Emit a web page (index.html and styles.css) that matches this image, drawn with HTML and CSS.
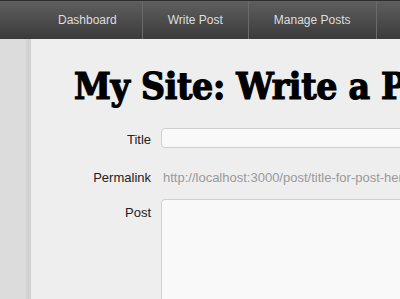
FILE: index.html
```html
<!doctype html>
<html lang="en">
<head>
    <meta name="viewport" content="width=device-width, initial-scale=1.0">
    <meta charset="UTF-8">
    <title>My Site: Write a Post</title>
    <link rel="stylesheet" href="styles.css">
</head>
<body>
<nav class="topnav">
    <ul class="nav-list">
        <li class="nav-item"><a href="#">Dashboard</a></li>
        <li class="nav-item"><a href="#">Write Post</a></li>
        <li class="nav-item"><a href="#">Manage Posts</a></li>
        <li class="nav-item"><a href="#">Settings</a></li>
    </ul>
</nav>
<div class="page">
    <main class="content">
        <h1 class="page-title">My Site: Write a Post</h1>
        <form class="post-form">
            <div class="field-row field-title">
                <label class="field-label" for="title">Title</label>
                <input class="text-input" type="text" id="title">
            </div>
            <div class="field-row field-permalink">
                <span class="field-label">Permalink</span>
                <span class="permalink">http://localhost:3000/post/title-for-post-here</span>
            </div>
            <div class="field-row field-post">
                <label class="field-label" for="post">Post</label>
                <textarea class="text-area" id="post"></textarea>
            </div>
        </form>
    </main>
</div>
</body>
</html>
```

FILE: styles.css
```css
body {
    margin: 0;
    font-family: "Liberation Sans", Arial, sans-serif;
    background-color: #dcdcdc;
    overflow: hidden;
}

.topnav {
    height: 38px;
    border-top: 1px solid #2e2e2e;
    background: linear-gradient(#5f5f5f, #3a3a3a);
    overflow: hidden;
}

.nav-list {
    display: flex;
    margin: 0;
    padding: 0 0 0 33px;
    list-style: none;
    white-space: nowrap;
}

.nav-item {
    border-right: 1px solid #6a6a6a;
}

.nav-item a {
    display: block;
    padding: 0 25px;
    line-height: 39px;
    font-size: 12px;
    color: #dedede;
    text-decoration: none;
}

.page {
    display: flex;
    height: calc(100vh - 39px);
    padding-left: 26px;
}

.content {
    flex: 1;
    border-left: 5px solid #d2d2d2;
    background-color: #eeeeee;
    overflow: hidden;
}

.page-title {
    margin: 29px 0 0;
    padding-left: 43px;
    font-family: "DejaVu Serif Condensed", "DejaVu Serif", serif;
    font-weight: 900;
    font-size: 37px;
    line-height: 1;
    letter-spacing: -0.3px;
    color: #000;
    -webkit-text-stroke: 1.2px #000;
    white-space: nowrap;
}

.post-form {
    margin-top: 23px;
}

.field-row {
    display: flex;
    align-items: flex-start;
}

.field-label {
    flex: none;
    width: 120px;
    margin-right: 10px;
    text-align: right;
    font-size: 13px;
    line-height: 20px;
    color: #222;
}

.field-title .field-label {
    padding-top: 2px;
}

.field-permalink {
    margin-top: 18px;
}

.field-post {
    margin-top: 11px;
}

.field-post .field-label {
    padding-top: 4px;
}

.permalink {
    padding-left: 2px;
    font-size: 13px;
    line-height: 20px;
    color: #999;
    white-space: nowrap;
}

.text-input,
.text-area {
    flex: none;
    box-sizing: border-box;
    width: 320px;
    margin: 0;
    border: 1px solid #cfcfcf;
    border-radius: 4px;
    background-color: #f9f9f9;
    font: inherit;
}

.text-input {
    height: 20px;
}

.text-area {
    height: 160px;
    resize: none;
}
```
